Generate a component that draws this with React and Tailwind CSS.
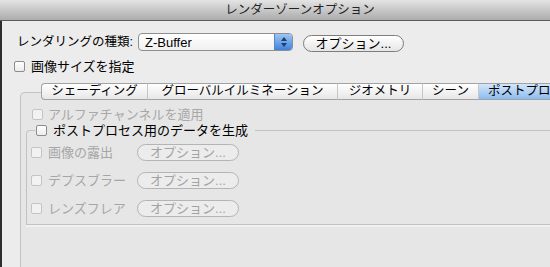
const FONT = "font-['Liberation_Sans','Noto_Sans_CJK_JP',sans-serif]";

function Checkbox({ disabled }) {
  return (
    <span
      className={`inline-block w-[11px] h-[11px] shrink-0 rounded-[2px] border ${
        disabled
          ? 'border-[#c4c4c4] bg-[#f2f2f2]'
          : 'border-[#8c8c8c] bg-gradient-to-b from-white to-[#ececec]'
      }`}
    />
  );
}

function PillButton({ disabled, className = '' }) {
  return (
    <button
      className={`h-[17px] rounded-full border flex items-center justify-center text-[13px] leading-none ${
        disabled
          ? 'border-[#b4b4b4] text-[#a2a2a2] bg-[#ececec]'
          : 'border-[#7d7d7d] text-black bg-gradient-to-b from-white to-[#e6e6e6]'
      } ${className}`}
    >
      オプション...
    </button>
  );
}

const tabs = [
  { label: 'シェーディング', w: 'w-[106px]' },
  { label: 'グローバルイルミネーション', w: 'w-[190px]' },
  { label: 'ジオメトリ', w: 'w-[85px]' },
  { label: 'シーン', w: 'w-[56px]' },
  { label: 'ポストプロセス', w: 'w-[110px]', active: true },
];

const postRows = ['画像の露出', 'デプスブラー', 'レンズフレア'];

export default function App() {
  return (
    <div className={`w-[550px] h-[267px] overflow-hidden bg-[#ececec] flex flex-col ${FONT}`}>
      {/* Title bar */}
      <div className="h-[21px] shrink-0 border-b border-[#5c5c5c] bg-gradient-to-b from-[#e4e4e4] to-[#acacac] flex items-center justify-center pl-[50px]">
        <span className="text-[12.5px] text-[#222] leading-none">レンダーゾーンオプション</span>
      </div>

      <div className="flex flex-1 min-h-0">
        <div className="w-[2px] bg-[#2e2e2e]" />

        <div className="flex-1 flex flex-col pl-[12px] pt-[12px] min-w-0">
          {/* Render type */}
          <div className="flex items-center h-[18px]">
            <span className="ml-[3px] w-[121px] text-[12.5px] leading-none text-black whitespace-nowrap">
              レンダリングの種類:
            </span>
            <div className="w-[155px] h-[18px] flex rounded-[4px] border border-[#8f8f8f] bg-gradient-to-b from-white to-[#f0f0f0] overflow-hidden">
              <span className="flex-1 flex items-center pl-[6px] text-[13px] leading-none text-black">Z-Buffer</span>
              <span className="w-[18px] bg-gradient-to-b from-[#9cc6f4] to-[#3f82d8] border-l border-[#5a86bd] flex flex-col items-center justify-center gap-[2px]">
                <svg width="6" height="4" viewBox="0 0 6 4"><path d="M3 0L6 4H0z" fill="#1d3e6e" /></svg>
                <svg width="6" height="4" viewBox="0 0 6 4"><path d="M0 0H6L3 4z" fill="#1d3e6e" /></svg>
              </span>
            </div>
            <PillButton className="ml-[10px] w-[101px] mt-[2px]" />
          </div>

          {/* Image size */}
          <div className="flex items-center h-[16px] mt-[7px] gap-[6px]">
            <Checkbox />
            <span className="text-[13px] leading-none text-black">画像サイズを指定</span>
          </div>

          {/* Tabs */}
          <div className="flex mt-[9px] ml-[27px] h-[17px] relative z-10">
            {tabs.map((t, i) => (
              <div
                key={t.label}
                className={`${t.w} shrink-0 h-full flex items-center justify-center text-[12.5px] leading-none whitespace-nowrap overflow-hidden border-y border-[#a2a2a2] ${
                  i === 0 ? 'border-l rounded-l-[4px]' : 'border-l border-l-[#c6c6c6]'
                } ${
                  t.active
                    ? 'bg-gradient-to-b from-[#d3e6fa] to-[#8dbcf0] justify-start pl-[9px] border-l-[#7fa6d6]'
                    : 'bg-gradient-to-b from-white to-[#e7e7e7]'
                } text-black`}
              >
                {t.label}
              </div>
            ))}
          </div>

          {/* Tab panel */}
          <div className="ml-[6px] -mt-[8px] w-[560px] flex-1 border-t border-l border-[#c2c2c2] rounded-tl-[5px] bg-[#e6e6e6] flex flex-col">
            <div className="flex items-center h-[16px] mt-[13px] ml-[11px] gap-[5px]">
              <Checkbox disabled />
              <span className="text-[13px] leading-none text-[#a8a8a8]">アルファチャンネルを適用</span>
            </div>

            <fieldset className="ml-[5px] border border-r-0 border-[#c2c2c2] rounded-tl-[4px] shadow-[0_2px_0_#f1f1f1] pl-[4px] pb-[7px]">
              <legend className="ml-[4px] pl-[1px] pr-[7px] h-[16px] flex items-center gap-[6px]">
                <Checkbox />
                <span className="text-[13px] leading-none text-black">ポストプロセス用のデータを生成</span>
              </legend>
              <div className="flex flex-col gap-[11px] pt-[6px]">
                {postRows.map((label) => (
                  <div key={label} className="flex items-center h-[17px]">
                    <Checkbox disabled />
                    <span className="ml-[6px] w-[89px] text-[13px] leading-none text-[#a6a6a6] whitespace-nowrap">
                      {label}
                    </span>
                    <PillButton disabled className="w-[102px]" />
                  </div>
                ))}
              </div>
            </fieldset>
          </div>
        </div>
      </div>
    </div>
  );
}
